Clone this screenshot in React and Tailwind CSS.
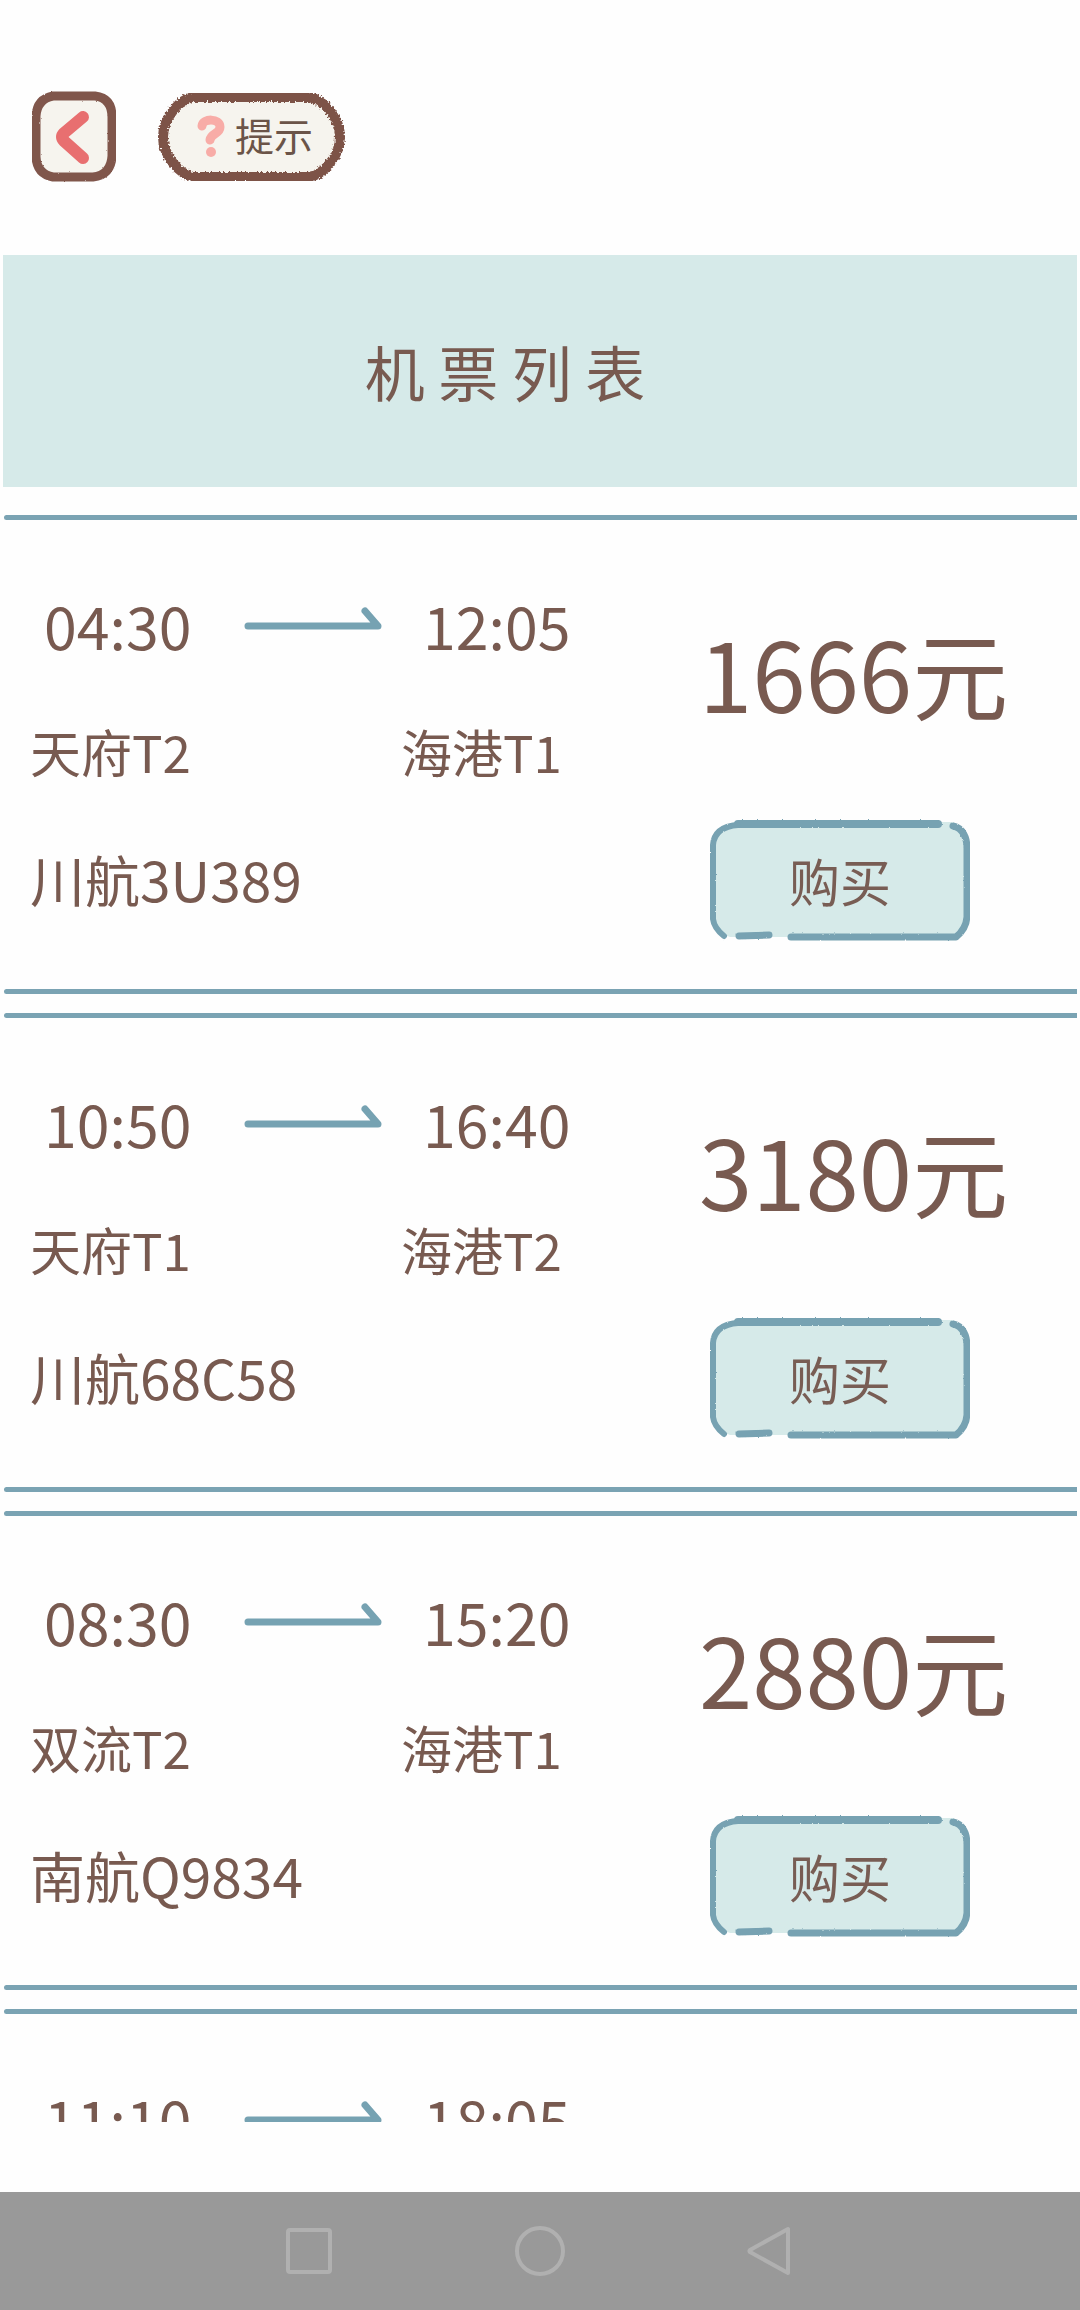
const flights = [
  { no: '川航3U389', depart: '04:30', arrive: '12:05', from: '天府T2', to: '海港T1', price: 1666 },
  { no: '川航68C58', depart: '10:50', arrive: '16:40', from: '天府T1', to: '海港T2', price: 3180 },
  { no: '南航Q9834', depart: '08:30', arrive: '15:20', from: '双流T2', to: '海港T1', price: 2880 },
  { no: '川航3U621', depart: '11:10', arrive: '18:05', from: '天府T2', to: '海港T1', price: 2350 },
]

// Shared filters that give the outlines their crayon look
function CrayonFilters() {
  return (
    <svg className="absolute size-0" aria-hidden="true">
      <filter id="crayon" x="-5%" y="-5%" width="110%" height="110%">
        <feTurbulence type="fractalNoise" baseFrequency="0.5" numOctaves="2" seed="4" result="noise" />
        <feDisplacementMap in="SourceGraphic" in2="noise" scale="6" xChannelSelector="R" yChannelSelector="G" />
      </filter>
      <filter id="crayon-soft" x="-5%" y="-5%" width="110%" height="110%">
        <feTurbulence type="fractalNoise" baseFrequency="0.4" numOctaves="2" seed="7" result="noise" />
        <feDisplacementMap in="SourceGraphic" in2="noise" scale="2" xChannelSelector="R" yChannelSelector="G" />
      </filter>
    </svg>
  )
}

function BackButton() {
  return (
    <button type="button" aria-label="返回" className="h-[92px] w-[86px] shrink-0">
      <svg viewBox="0 0 86 92" className="size-full" fill="none">
        <path
          d="M22 6H64Q81 8 81 27V66Q80 85 62 87H22Q6 84 5 67V26Q6 9 22 6Z"
          fill="#f6f4ee"
          stroke="#80564c"
          strokeWidth="9"
          filter="url(#crayon-soft)"
        />
        <path
          d="M52 27L33 43Q29 47 33 51L52 68"
          stroke="#e86f70"
          strokeWidth="12"
          strokeLinecap="round"
          strokeLinejoin="round"
        />
      </svg>
    </button>
  )
}

function HintButton() {
  return (
    <button type="button" className="relative flex h-[92px] w-[189px] shrink-0 items-center gap-2.5 pb-1 pl-[38px]">
      <svg viewBox="0 0 189 92" className="absolute inset-0 size-full" fill="none" aria-hidden="true">
        <path
          d="M36 7H152C168 10 183 29 183 47C183 65 168 84 152 87H36C22 84 6 65 6 47C6 29 21 10 36 7Z"
          fill="#f6f4ee"
          stroke="#7d5247"
          strokeWidth="10"
          filter="url(#crayon)"
        />
      </svg>
      <svg viewBox="0 0 30 44" className="relative mt-1 h-11 w-[30px]" fill="none" aria-hidden="true">
        <path
          d="M7 12C8 4 25 4 25 13C25 20 16 19 15 26"
          stroke="#f8aca7"
          strokeWidth="9"
          strokeLinecap="round"
          strokeLinejoin="round"
        />
        <circle cx="16" cy="38" r="5" fill="#f8aca7" />
      </svg>
      <span className="relative text-[39px] leading-none text-[#6b5448]">提示</span>
    </button>
  )
}

function Arrow() {
  return (
    <svg viewBox="0 0 140 36" className="h-9 w-[140px]" fill="none" aria-hidden="true">
      <path
        d="M4 19H134L121 4"
        stroke="#76a2b2"
        strokeWidth="7"
        strokeLinecap="round"
        strokeLinejoin="round"
      />
    </svg>
  )
}

function BuyButton() {
  return (
    <button type="button" className="relative ml-[11px] h-[122px] w-[260px] text-[51px] leading-none text-[#785d54]">
      <svg viewBox="0 0 260 122" className="absolute inset-0 size-full" fill="none" aria-hidden="true">
        <path d="M24 3H242Q257 8 257 26V98Q255 112 246 118H20Q4 112 3 98V24Q6 8 24 3Z" fill="#d6eae9" />
        <g stroke="#77a2b2" strokeLinecap="round" strokeLinejoin="round" filter="url(#crayon-soft)">
          <path d="M28 5H228" strokeWidth="8" />
          <path d="M243 7C253 9 257 19 257 29V98Q256 110 246 118H81" strokeWidth="7" />
          <path d="M29 117L59 116" strokeWidth="7" />
          <path d="M14 117Q4 109 3 100V26C4 13 14 7 28 6" strokeWidth="6" />
        </g>
      </svg>
      <span className="relative">购买</span>
    </button>
  )
}

function Rule() {
  return <div className="ml-1 mr-[3px] h-[5px] rounded-l-full bg-[#7aa3b3]" />
}

function FlightCard({ flight }) {
  return (
    <li>
      <Rule />
      <div className="grid grid-cols-[371fr_298fr_381fr] pt-[41px] pb-[47px] pl-[30px]">
        <div className="col-span-2 grid grid-cols-[371fr_298fr] auto-rows-[127px] items-center">
          <div className="flex items-center gap-[53px] pl-3.5 text-[59px] leading-none">
            <time>{flight.depart}</time>
            <Arrow />
          </div>
          <time className="pl-[22px] text-[59px] leading-none">{flight.arrive}</time>
          <span className="text-[51px] leading-none">{flight.from}</span>
          <span className="text-[51px] leading-none">{flight.to}</span>
          <span className="col-span-2 text-[55px] leading-none">{flight.no}</span>
        </div>
        <div className="flex flex-col items-start gap-[87px] pt-[51px]">
          <span className="text-[96px] leading-[120px] whitespace-nowrap">{flight.price}元</span>
          <BuyButton />
        </div>
      </div>
      <Rule />
    </li>
  )
}

function SystemNav() {
  return (
    <nav className="flex h-[118px] shrink-0 items-center justify-center gap-[181px] bg-[#999999]">
      <button type="button" aria-label="最近任务" className="size-[50px]">
        <svg viewBox="0 0 50 50" fill="none" stroke="#b0b0b0" strokeWidth="4">
          <rect x="4" y="4" width="42" height="42" rx="2" />
        </svg>
      </button>
      <button type="button" aria-label="主页" className="size-[50px]">
        <svg viewBox="0 0 50 50" fill="none" stroke="#b0b0b0" strokeWidth="4">
          <circle cx="25" cy="25" r="23" />
        </svg>
      </button>
      <button type="button" aria-label="后退" className="size-[50px]">
        <svg viewBox="0 0 50 50" fill="none" stroke="#b0b0b0" strokeWidth="4" strokeLinejoin="round">
          <path d="M42 3V47L4 26Q3 25 4 24Z" />
        </svg>
      </button>
    </nav>
  )
}

export default function App() {
  return (
    <div className="flex h-screen flex-col overflow-hidden bg-[#fefefe] font-['Noto_Sans_CJK_SC',sans-serif] text-[#785a50]">
      <CrayonFilters />
      <header className="flex shrink-0 gap-10 px-[31px] pt-[90px] pb-[73px]">
        <BackButton />
        <HintButton />
      </header>

      <div className="mx-[3px] flex h-[232px] shrink-0 items-center justify-center bg-[#d6eae9] pr-[70px]">
        <h1 className="text-[60px] leading-none">机 票 列 表</h1>
      </div>

      <main className="mt-7 mb-[70px] min-h-0 flex-1 overflow-y-auto [scrollbar-width:none]">
        <ul className="flex flex-col gap-[19px]">
          {flights.map((flight) => (
            <FlightCard key={flight.no} flight={flight} />
          ))}
        </ul>
      </main>

      <SystemNav />
    </div>
  )
}
